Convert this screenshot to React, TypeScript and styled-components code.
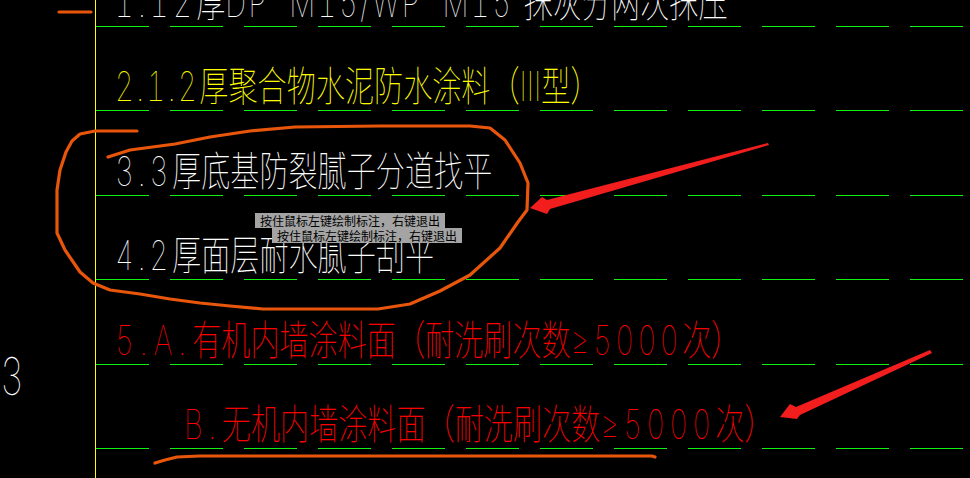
import styled, { createGlobalStyle } from "styled-components";

const Global = createGlobalStyle`
  * { box-sizing: border-box; }
  html, body {
    margin: 0;
    padding: 0;
    background: #000;
    overflow: hidden;
  }
`;

const Screen = styled.div`
  position: relative;
  width: 970px;
  height: 478px;
  overflow: hidden;
  background: #000;
  display: flex;
`;

const Gutter = styled.div`
  width: 95px;
  flex: none;
  display: flex;
  flex-direction: column;
`;

const Sheet = styled.div`
  flex: 1;
  display: flex;
  flex-direction: column;
  border-left: 1px solid #ffff00;
`;

// each row ends in the green dashed CAD line
const Row = styled.div<{ $h: number; $indent?: number; $first?: boolean }>`
  height: ${(p) => p.$h}px;
  flex: none;
  display: flex;
  align-items: flex-end;
  margin-top: ${(p) => (p.$first ? "-57px" : "0")};
  padding: 0 0 4px ${(p) => 19 + (p.$indent ?? 0)}px;
  background-image: repeating-linear-gradient(
    90deg,
    #12f012 0 53px,
    transparent 53px 74px
  );
  background-size: 100% 1px;
  background-position: left bottom;
  background-repeat: no-repeat;
`;

const Label = styled.span<{ $color: string }>`
  display: inline-block;
  white-space: pre;
  font-family: Inter, "Noto Sans CJK SC", sans-serif;
  font-weight: 100;
  font-size: 41px;
  line-height: 41px;
  color: ${(p) => p.$color};
  transform: scaleX(0.71);
  transform-origin: left bottom;
  font-variant-numeric: tabular-nums;
`;

// half-width runs (numbers, latin) are spaced out like the CAD font
const Half = styled.span<{ $ls?: number }>`
  letter-spacing: ${(p) => p.$ls ?? 3.5}px;
`;

const SideMark = styled(Label)`
  font-size: 52px;
  line-height: 52px;
  margin-top: 351px;
  align-self: flex-start;
`;

const Overlay = styled.svg`
  position: absolute;
  inset: 0;
  pointer-events: none;
`;

const Tip = styled.div<{ $x: number; $y: number }>`
  position: absolute;
  left: ${(p) => p.$x}px;
  top: ${(p) => p.$y}px;
  width: 190px;
  height: 15px;
  padding: 0 5px;
  background: #a4a4a4;
  color: #000;
  font-family: "Noto Sans CJK SC", sans-serif;
  font-size: 12px;
  line-height: 15px;
  white-space: nowrap;
`;

const ORANGE = "#e8560c";
const ARROW = "#f21e1e";

const loop =
  "M137,131 L95,131 L80,134 L72,141 L66,152 L60,170 L57,190 L57,233 L65,250 L80,272 L93,283 L110,290 L140,294 L170,299 L200,303 L230,306 L263,309 L378,309 L410,304 L440,291 L470,275 L500,248 L518,222 L527,210 L528,183 L520,163 L505,140 L490,128 L470,126 L380,126 L295,127 L250,131 L210,137 L175,144 L130,150 L108,157";

function App() {
  return (
    <>
      <Global />
      <Screen>
        <Gutter>
          <SideMark $color="#fff">3</SideMark>
        </Gutter>
        <Sheet>
          <Row $h={84} $first>
            <Label $color="#fff">
              <Half $ls={6}>1.12</Half>厚<Half>DP  M15/WP  M15 </Half>抹灰分两次抹压
            </Label>
          </Row>
          <Row $h={84}>
            <Label $color="#ffff00">
              <Half>2.1.2</Half>厚聚合物水泥防水涂料（Ⅲ型）
            </Label>
          </Row>
          <Row $h={85}>
            <Label $color="#fff">
              <Half $ls={5.5}>3.3</Half>厚底基防裂腻子分道找平
            </Label>
          </Row>
          <Row $h={84}>
            <Label $color="#fff">
              <Half $ls={5.5}>4.2</Half>厚面层耐水腻子刮平
            </Label>
          </Row>
          <Row $h={85}>
            <Label $color="#ff0000">
              <Half $ls={8.5}>5.A.</Half>有机内墙涂料面（耐洗刷次数<Half $ls={5}>≥5000</Half>次）
            </Label>
          </Row>
          <Row $h={84} $indent={69}>
            <Label $color="#ff0000">
              <Half $ls={8}>B.</Half>无机内墙涂料面（耐洗刷次数<Half $ls={6}>≥5000</Half>次）
            </Label>
          </Row>
        </Sheet>

        <Overlay width="970" height="478" viewBox="0 0 970 478">
          <g fill="none" stroke={ORANGE} strokeWidth="3.2" strokeLinejoin="round" strokeLinecap="round">
            <path d="M59,12 L91,12" />
            <path d={loop} />
            <path d="M155,463 L165,460 L177,457 L200,456 L652,456 L655,457" />
          </g>
          <g fill={ARROW}>
            <polygon points="530,208 542,197 547,200 768,143 769,145 550,209 547,214" />
            <polygon points="780,417 790,404 796,407 930,350 932,353 800,415 797,419" />
          </g>
        </Overlay>

        <Tip $x={255} $y={213}>按住鼠标左键绘制标注，右键退出</Tip>
        <Tip $x={272} $y={228}>按住鼠标左键绘制标注，右键退出</Tip>
      </Screen>
    </>
  );
}

export default App;
